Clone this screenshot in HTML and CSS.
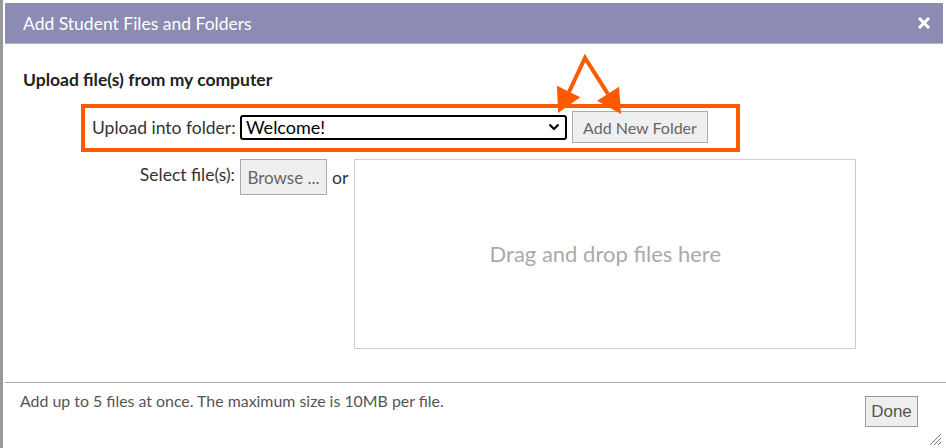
FILE: index.html
```html
<!DOCTYPE html>
<html>
<head>
<meta charset="utf-8">
<title>Add Student Files and Folders</title>
<link rel="stylesheet" href="styles.css">
</head>
<body>
<div class="page">
  <div class="edge"></div>
  <div class="dialog">
    <div class="titlebar">
      <span class="title">Add Student Files and Folders</span>
      <svg class="close" width="12" height="12" viewBox="0 0 12 12"><path d="M2 2 L10 10 M10 2 L2 10" stroke="#fff" stroke-width="3" stroke-linecap="square"/></svg>
    </div>
    <div class="content">
      <h2 class="heading">Upload file(s) from my computer</h2>
      <div class="highlight">
        <span class="label label-folder">Upload into folder:</span>
        <div class="select">
          <span>Welcome!</span>
          <svg width="12" height="8" viewBox="0 0 12 8"><path d="M1.5 1.5 L6 6 L10.5 1.5" fill="none" stroke="#000" stroke-width="2.2"/></svg>
        </div>
        <button class="btn btn-folder">Add New Folder</button>
      </div>
      <div class="filerow">
        <span class="label label-files">Select file(s):</span>
        <button class="btn btn-browse">Browse ...</button>
        <span class="or">or</span>
        <div class="dropzone">Drag and drop files here</div>
      </div>
    </div>
    <div class="footer">
      <span class="note">Add up to 5 files at once. The maximum size is 10MB per file.</span>
      <button class="done">Done</button>
    </div>
    <svg class="arrows" width="946" height="448" viewBox="0 0 946 448">
      <g stroke="#ff5a00" stroke-width="4" fill="none" stroke-linejoin="miter">
        <path d="M569 92 L585 58 L608 94"/>
      </g>
      <g fill="#ff5a00">
        <polygon points="558,113 557,85.7 580.3,97.3"/>
        <polygon points="621,114 619.1,86.7 597.1,100.7"/>
      </g>
    </svg>
    <svg class="grip" width="14" height="14" viewBox="0 0 14 14">
      <path d="M13 2 L2 13 M13 6 L6 13 M13 10 L10 13" stroke="#777" stroke-width="1"/>
    </svg>
  </div>
</div>
</body>
</html>
```

FILE: styles.css
```css
* { box-sizing: border-box; }
html, body {
  margin: 0;
  padding: 0;
  background: #fff;
  width: 946px;
  height: 448px;
  overflow: hidden;
}
body {
  font-family: Lato, "Open Sans", sans-serif;
  color: #333;
}
.page {
  display: flex;
  height: 448px;
}
.edge {
  width: 3px;
  background: #9a9a9a;
  flex: none;
}
.dialog {
  position: relative;
  margin-left: 2px;
  width: 941px;
  height: 448px;
  padding-top: 3px;
  display: flex;
  flex-direction: column;
}
.titlebar {
  width: 938px;
  height: 41px;
  background: #8b8bb4;
  border-bottom: 1px solid #b3b3c8;
  display: flex;
  align-items: center;
  justify-content: space-between;
  padding: 0 13px 0 18px;
}
.title {
  color: #fff;
  font-size: 17.5px;
}
.close { display: block; }
.content {
  padding-left: 18px;
  height: 338px;
}
.heading {
  margin: 25px 0 0 0;
  font-size: 17.5px;
  line-height: 22px;
  font-weight: bold;
  color: #222;
}
.highlight {
  margin: 13px 0 0 58px;
  width: 659px;
  height: 48px;
  border: 4px solid #ff5a00;
  display: flex;
  align-items: center;
  padding: 0 0 2px 7px;
}
.label {
  font-size: 17.5px;
  color: #333;
}
.label-folder {
  width: 143px;
  white-space: nowrap;
}
.select {
  margin-left: 5px;
  width: 327px;
  height: 25px;
  border: 2px solid #000;
  border-radius: 3px;
  display: flex;
  align-items: center;
  justify-content: space-between;
  padding: 0 5px 0 4px;
  font-size: 18px;
  color: #000;
}
.select svg { display: block; }
.btn {
  font-family: Lato, "Open Sans", sans-serif;
  background: #efefef;
  border: 1px solid #aaa;
  color: #666;
  padding: 0;
  margin: 0;
}
.btn-folder {
  margin-left: 5px;
  width: 136px;
  height: 32px;
  font-size: 16px;
}
.filerow {
  display: flex;
  align-items: flex-start;
  margin-top: 7px;
}
.label-files {
  width: 212px;
  text-align: right;
  line-height: 22px;
  margin-top: 5px;
}
.btn-browse {
  margin-left: 5px;
  width: 87px;
  height: 36px;
  font-size: 17px;
}
.or {
  margin: 8px 0 0 5px;
  font-size: 17.5px;
  line-height: 22px;
  color: #333;
}
.dropzone {
  margin-left: 6px;
  width: 502px;
  height: 190px;
  border: 1px solid #ccc;
  display: flex;
  align-items: center;
  justify-content: center;
  font-size: 22px;
  color: #aaa;
  padding-bottom: 2px;
}
.footer {
  border-top: 1px solid #aaa;
  height: 66px;
  display: flex;
  justify-content: space-between;
  align-items: flex-start;
  padding: 0 28px 0 15px;
}
.note {
  margin-top: 8px;
  font-size: 15.9px;
  color: #555;
}
.done {
  margin-top: 13px;
  width: 53px;
  height: 31px;
  background: #eee;
  border: 1px solid #999;
  color: #555;
  font-family: "Liberation Sans", Arial, sans-serif;
  font-size: 17px;
  padding: 0;
}
.arrows {
  position: absolute;
  left: -5px;
  top: 0;
  pointer-events: none;
}
.grip {
  position: absolute;
  right: 4px;
  bottom: 2px;
}
```
